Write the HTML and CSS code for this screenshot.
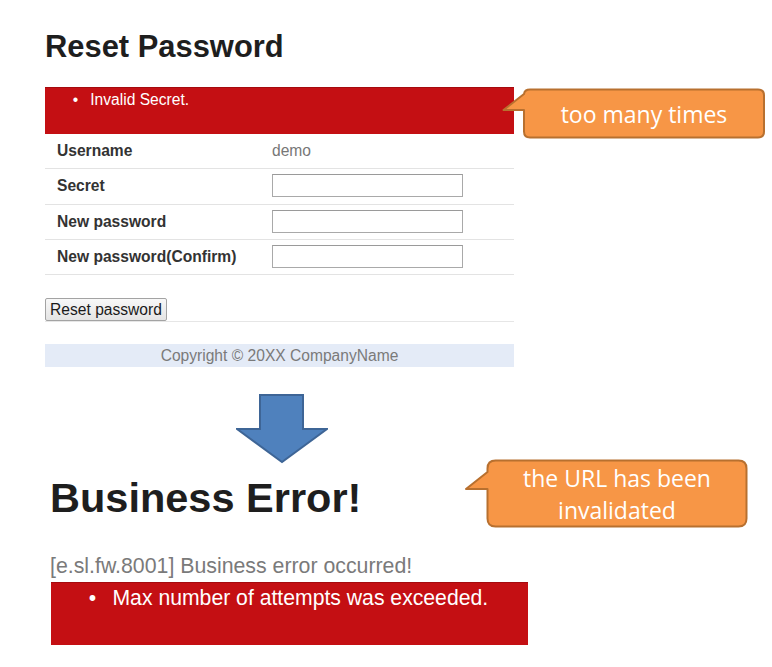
FILE: index.html
```html
<!DOCTYPE html>
<html lang="en">
<head>
<meta charset="utf-8">
<title>Reset Password - Business Error</title>
<link rel="stylesheet" href="styles.css">
</head>
<body>
<div class="canvas">
  <section class="panel-top">
    <h1 class="title">Reset Password</h1>
    <div class="alert alert-small">
      <ul class="alert-list"><li>Invalid Secret.</li></ul>
    </div>
    <div class="form">
      <div class="row"><div class="label">Username</div><div class="value">demo</div></div>
      <div class="row"><div class="label">Secret</div><div class="value"><input class="field" type="password"></div></div>
      <div class="row"><div class="label">New password</div><div class="value"><input class="field" type="password"></div></div>
      <div class="row"><div class="label">New password(Confirm)</div><div class="value"><input class="field" type="password"></div></div>
    </div>
    <div class="actions"><button class="btn" type="button">Reset password</button></div>
    <footer class="copyright">Copyright © 20XX CompanyName</footer>
  </section>

  <div class="arrow">
    <svg width="92" height="71" viewBox="0 0 92 71">
      <polygon points="24,2 67,2 67,36 91,36 46,69 1,36 24,36" fill="#4f81bd" stroke="#3e6596" stroke-width="2" stroke-linejoin="miter"/>
    </svg>
  </div>

  <section class="panel-bottom">
    <h1 class="title-big">Business Error!</h1>
    <p class="subtitle">[e.sl.fw.8001] Business error occurred!</p>
    <div class="alert alert-big">
      <ul class="alert-list"><li>Max number of attempts was exceeded.</li></ul>
    </div>
  </section>

  <div class="callout callout-one">
    <svg class="callout-shape" width="264" height="51" viewBox="0 0 264 51">
      <path d="M28,1.5 H256 Q262,1.5 262,7.5 V43.5 Q262,49.5 256,49.5 H28 Q22,49.5 22,43.5 V22 L1.5,22 L22,6 Q22.5,1.5 28,1.5 Z" fill="#f79646" stroke="#b8702f" stroke-width="2" stroke-linejoin="round"/>
    </svg>
    <div class="callout-text callout-text-one">too many times</div>
  </div>

  <div class="callout callout-two">
    <svg class="callout-shape" width="286" height="70" viewBox="0 0 286 70">
      <path d="M31.5,1.5 H274.5 Q282.5,1.5 282.5,9.5 V59.5 Q282.5,67.5 274.5,67.5 H31.5 Q23.5,67.5 23.5,59.5 V30 L2,30 L23.5,13 V9.5 Q23.5,1.5 31.5,1.5 Z" fill="#f79646" stroke="#b8702f" stroke-width="2" stroke-linejoin="round"/>
    </svg>
    <div class="callout-text callout-text-two">the URL has been<br>invalidated</div>
  </div>
</div>
</body>
</html>
```

FILE: styles.css
```css
html, body {
  margin: 0;
  padding: 0;
  background: #ffffff;
}

body {
  font-family: "Liberation Sans", Arial, sans-serif;
  color: #333333;
}

.canvas {
  position: relative;
  width: 772px;
  height: 667px;
  overflow: hidden;
}

/* ---------- top panel ---------- */
.panel-top {
  margin-left: 45px;
  width: 469px;
  padding-top: 29px;
}

.title {
  margin: 0 0 22px 0;
  font-size: 30.9px;
  line-height: 36px;
  font-weight: bold;
  color: #1e1e1e;
}

.alert {
  background: #c40f13;
  border-top: 1px solid #a50a0e;
  box-sizing: border-box;
  color: #ffffff;
}

.alert-list {
  list-style: none;
  margin: 0;
  padding: 0 0 0 1.78em;
}

.alert-list li {
  display: flex;
}

.alert-list li::before {
  content: "•";
  width: 1.12em;
  flex: none;
}

.alert-small {
  height: 47px;
  padding-top: 3px;
  font-size: 15.6px;
  line-height: 18px;
}

.form {
  display: flex;
  flex-direction: column;
}

.row {
  display: flex;
  align-items: center;
  height: 35.33px;
  box-sizing: border-box;
  border-bottom: 1px solid #e3e3e3;
  font-size: 15.6px;
}

.label {
  width: 215px;
  padding-left: 12px;
  font-weight: bold;
  color: #333333;
}

.value {
  color: #777777;
  display: flex;
  align-items: center;
}

.field {
  width: 191px;
  height: 23px;
  box-sizing: border-box;
  margin: 0 0 1px 0;
  padding: 0 4px;
  border: 1px solid #a9a9a9;
  border-top-color: #9a9a9a;
  background: #ffffff;
  font-family: "Liberation Sans", Arial, sans-serif;
  font-size: 14px;
}

.actions {
  padding-top: 23px;
  border-bottom: 1px solid #e6e6e6;
  display: flex;
}

.btn {
  height: 23px;
  width: 122px;
  box-sizing: border-box;
  margin: 0;
  padding: 0;
  border: 1px solid #a3a3a3;
  border-radius: 2px;
  background: linear-gradient(#f8f8f8, #e4e4e4);
  font-family: "Liberation Sans", Arial, sans-serif;
  font-size: 15.6px;
  line-height: 21px;
  color: #1a1a1a;
}

.copyright {
  margin-top: 22px;
  height: 23px;
  line-height: 23px;
  background: #e4ebf7;
  text-align: center;
  font-size: 15.6px;
  color: #7a7a7a;
}

/* ---------- arrow ---------- */
.arrow {
  margin: 26px 0 0 236px;
  width: 92px;
  height: 71px;
}

.arrow svg {
  display: block;
}

/* ---------- bottom panel ---------- */
.panel-bottom {
  margin: 10px 0 0 50px;
  width: 478px;
}

.title-big {
  margin: 0;
  font-size: 41.5px;
  line-height: 48px;
  font-weight: bold;
  color: #1e1e1e;
}

.subtitle {
  margin: 32px 0 4px 0;
  font-size: 21.3px;
  line-height: 24px;
  color: #7a7a7a;
}

.alert-big {
  margin-left: 1px;
  width: 477px;
  height: 63px;
  padding-top: 3px;
  font-size: 21.2px;
  line-height: 24px;
}

/* ---------- callouts (annotations over the page) ---------- */
.callout {
  position: absolute;
}

.callout-shape {
  display: block;
}

.callout-one {
  left: 502px;
  top: 88px;
  width: 264px;
  height: 51px;
}

.callout-two {
  left: 464px;
  top: 459px;
  width: 286px;
  height: 70px;
}

.callout-text {
  position: absolute;
  top: 0;
  bottom: 0;
  display: flex;
  align-items: center;
  justify-content: center;
  text-align: center;
  font-family: "Open Sans", "Noto Sans", sans-serif;
  font-size: 23px;
  color: #ffffff;
}

.callout-text-one {
  left: 22px;
  right: 2px;
  line-height: 30px;
}

.callout-text-two {
  left: 23px;
  right: 3px;
  line-height: 32px;
}
```
